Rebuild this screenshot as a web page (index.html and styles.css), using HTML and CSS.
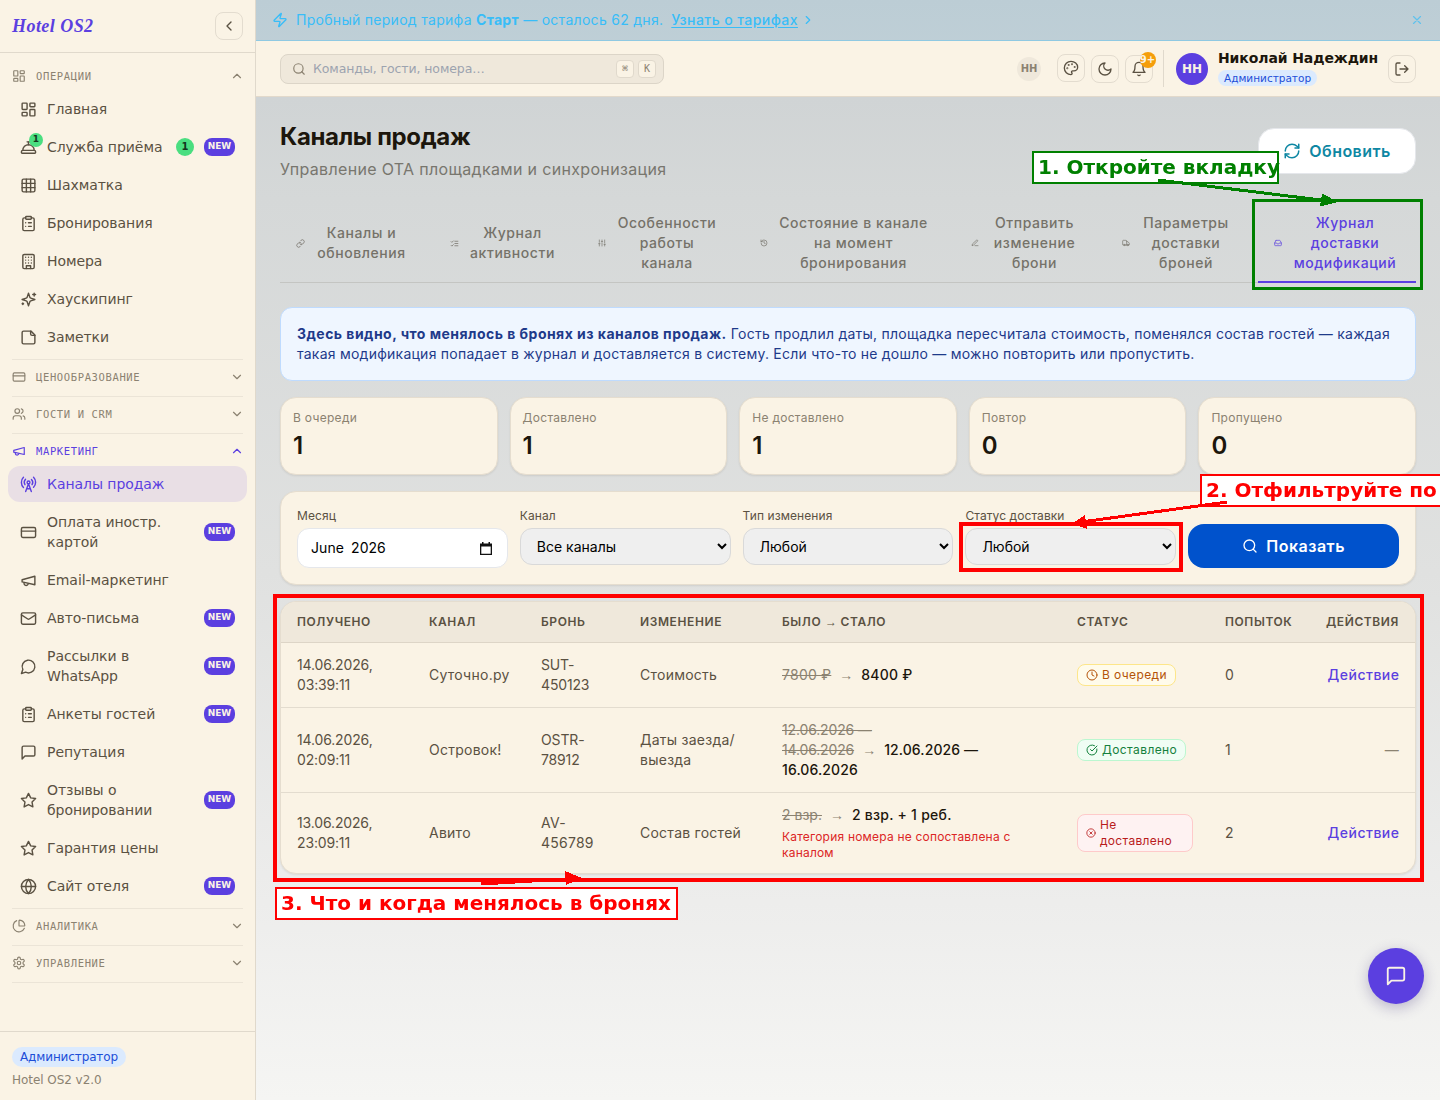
FILE: index.html
```html
<!DOCTYPE html>
<html lang="ru">
<head>
    <meta charset="UTF-8">
    <meta name="viewport" content="width=device-width, initial-scale=1.0">
    <title>Каналы продаж — Hotel OS2</title>
    <link rel="stylesheet" href="styles.css">
</head>
<body>
    <!-- Icon sprite -->
    <svg class="sprite" xmlns="http://www.w3.org/2000/svg">
        <symbol id="i-dashboard" viewBox="0 0 24 24"><rect width="7" height="9" x="3" y="3" rx="1"/><rect width="7" height="5" x="14" y="3" rx="1"/><rect width="7" height="9" x="14" y="12" rx="1"/><rect width="7" height="5" x="3" y="16" rx="1"/></symbol>
        <symbol id="i-bell-desk" viewBox="0 0 24 24"><path d="M3 20a1 1 0 0 1-1-1v-1a2 2 0 0 1 2-2h16a2 2 0 0 1 2 2v1a1 1 0 0 1-1 1Z"/><path d="M20 16a8 8 0 1 0-16 0"/><path d="M12 4v4"/><path d="M10 4h4"/></symbol>
        <symbol id="i-grid" viewBox="0 0 24 24"><rect width="18" height="18" x="3" y="3" rx="2"/><path d="M3 9h18M3 15h18M9 3v18M15 3v18"/></symbol>
        <symbol id="i-clipboard" viewBox="0 0 24 24"><rect width="8" height="4" x="8" y="2" rx="1"/><path d="M16 4h2a2 2 0 0 1 2 2v14a2 2 0 0 1-2 2H6a2 2 0 0 1-2-2V6a2 2 0 0 1 2-2h2"/><path d="M12 11h4M12 16h4M8 11h.01M8 16h.01"/></symbol>
        <symbol id="i-hotel" viewBox="0 0 24 24"><rect width="16" height="20" x="4" y="2" rx="2"/><path d="M9 22v-4h6v4M8 6h.01M16 6h.01M12 6h.01M12 10h.01M12 14h.01M16 10h.01M16 14h.01M8 10h.01M8 14h.01"/></symbol>
        <symbol id="i-sparkles" viewBox="0 0 24 24"><path d="m12 3-1.9 5.8a2 2 0 0 1-1.3 1.3L3 12l5.8 1.9a2 2 0 0 1 1.3 1.3L12 21l1.9-5.8a2 2 0 0 1 1.3-1.3L21 12l-5.8-1.9a2 2 0 0 1-1.3-1.3Z"/><path d="M20 3v4M22 5h-4M4 17v2M5 18H3"/></symbol>
        <symbol id="i-note" viewBox="0 0 24 24"><path d="M15.5 3H5a2 2 0 0 0-2 2v14a2 2 0 0 0 2 2h14a2 2 0 0 0 2-2V8.500Z"/><path d="M15 3v4a2 2 0 0 0 2 2h4"/></symbol>
        <symbol id="i-card" viewBox="0 0 24 24"><rect width="20" height="14" x="2" y="5" rx="2"/><path d="M2 10h20"/></symbol>
        <symbol id="i-users" viewBox="0 0 24 24"><path d="M16 21v-2a4 4 0 0 0-4-4H6a4 4 0 0 0-4 4v2"/><circle cx="9" cy="7" r="4"/><path d="M22 21v-2a4 4 0 0 0-3-3.870M16 3.130a4 4 0 0 1 0 7.750"/></symbol>
        <symbol id="i-megaphone" viewBox="0 0 24 24"><path d="m3 11 18-5v12L3 14v-3z"/><path d="M11.600 16.800a3 3 0 1 1-5.800-1.600"/></symbol>
        <symbol id="i-tower" viewBox="0 0 24 24"><path d="M4.900 16.100C1 12.200 1 5.800 4.900 1.900M7.800 4.700a6.140 6.140 0 0 0-.8 7.500"/><circle cx="12" cy="9" r="2"/><path d="M16.200 4.800c2 2 2.260 5.110.8 7.470M19.100 1.900a9.960 9.960 0 0 1 0 14.100M9.500 18h5M8 22l4-11 4 11"/></symbol>
        <symbol id="i-mail" viewBox="0 0 24 24"><rect width="20" height="16" x="2" y="4" rx="2"/><path d="m22 7-8.970 5.700a1.940 1.940 0 0 1-2.060 0L2 7"/></symbol>
        <symbol id="i-chat-round" viewBox="0 0 24 24"><path d="M7.900 20A9 9 0 1 0 4 16.100L2 22Z"/></symbol>
        <symbol id="i-chat" viewBox="0 0 24 24"><path d="M21 15a2 2 0 0 1-2 2H7l-4 4V5a2 2 0 0 1 2-2h14a2 2 0 0 1 2 2z"/></symbol>
        <symbol id="i-star" viewBox="0 0 24 24"><path d="m12 2 3.090 6.260L22 9.270l-5 4.870 1.180 6.880L12 17.770l-6.180 3.250L7 14.140 2 9.270l6.910-1.010z"/></symbol>
        <symbol id="i-globe" viewBox="0 0 24 24"><circle cx="12" cy="12" r="10"/><path d="M12 2a14.500 14.500 0 0 0 0 20 14.500 14.500 0 0 0 0-20M2 12h20"/></symbol>
        <symbol id="i-pie" viewBox="0 0 24 24"><path d="M21 12c.552 0 1.005-.449.950-.998a10 10 0 0 0-8.953-8.951c-.550-.055-.998.398-.998.950v8a1 1 0 0 0 1 1z"/><path d="M21.210 15.890A10 10 0 1 1 8 2.830"/></symbol>
        <symbol id="i-gear" viewBox="0 0 24 24"><path d="M12.220 2h-.440a2 2 0 0 0-2 2v.180a2 2 0 0 1-1 1.730l-.430.250a2 2 0 0 1-2 0l-.150-.080a2 2 0 0 0-2.730.730l-.220.380a2 2 0 0 0 .730 2.730l.150.100a2 2 0 0 1 1 1.720v.510a2 2 0 0 1-1 1.740l-.150.090a2 2 0 0 0-.730 2.730l.220.380a2 2 0 0 0 2.730.730l.150-.080a2 2 0 0 1 2 0l.430.250a2 2 0 0 1 1 1.730V20a2 2 0 0 0 2 2h.440a2 2 0 0 0 2-2v-.180a2 2 0 0 1 1-1.730l.430-.250a2 2 0 0 1 2 0l.150.080a2 2 0 0 0 2.730-.730l.220-.390a2 2 0 0 0-.730-2.730l-.150-.080a2 2 0 0 1-1-1.740v-.500a2 2 0 0 1 1-1.740l.150-.090a2 2 0 0 0 .730-2.730l-.220-.380a2 2 0 0 0-2.730-.730l-.150.080a2 2 0 0 1-2 0l-.430-.250a2 2 0 0 1-1-1.730V4a2 2 0 0 0-2-2z"/><circle cx="12" cy="12" r="3"/></symbol>
        <symbol id="i-up" viewBox="0 0 24 24"><path d="m18 15-6-6-6 6"/></symbol>
        <symbol id="i-down" viewBox="0 0 24 24"><path d="m6 9 6 6 6-6"/></symbol>
        <symbol id="i-left" viewBox="0 0 24 24"><path d="m15 18-6-6 6-6"/></symbol>
        <symbol id="i-right" viewBox="0 0 24 24"><path d="m9 18 6-6-6-6"/></symbol>
        <symbol id="i-zap" viewBox="0 0 24 24"><path d="M4 14a1 1 0 0 1-.780-1.630l9.900-10.200a.5.5 0 0 1 .860.460l-1.920 6.020A1 1 0 0 0 13 10h7a1 1 0 0 1 .780 1.630l-9.900 10.200a.5.5 0 0 1-.860-.460l1.920-6.020A1 1 0 0 0 11 14z"/></symbol>
        <symbol id="i-x" viewBox="0 0 24 24"><path d="M18 6 6 18M6 6l12 12"/></symbol>
        <symbol id="i-search" viewBox="0 0 24 24"><circle cx="11" cy="11" r="8"/><path d="m21 21-4.300-4.300"/></symbol>
        <symbol id="i-palette" viewBox="0 0 24 24"><circle cx="13.500" cy="6.500" r=".5"/><circle cx="17.500" cy="10.500" r=".5"/><circle cx="8.500" cy="7.500" r=".5"/><circle cx="6.500" cy="12.500" r=".5"/><path d="M12 2C6.500 2 2 6.500 2 12s4.500 10 10 10c.926 0 1.648-.746 1.648-1.688 0-.437-.180-.835-.437-1.125-.290-.289-.438-.652-.438-1.125a1.640 1.640 0 0 1 1.668-1.668h1.996c3.051 0 5.555-2.503 5.555-5.554C21.965 6.012 17.461 2 12 2z"/></symbol>
        <symbol id="i-moon" viewBox="0 0 24 24"><path d="M12 3a6 6 0 0 0 9 9 9 9 0 1 1-9-9Z"/></symbol>
        <symbol id="i-bell" viewBox="0 0 24 24"><path d="M6 8a6 6 0 0 1 12 0c0 7 3 9 3 9H3s3-2 3-9M10.300 21a1.940 1.940 0 0 0 3.400 0"/></symbol>
        <symbol id="i-logout" viewBox="0 0 24 24"><path d="M9 21H5a2 2 0 0 1-2-2V5a2 2 0 0 1 2-2h4M16 17l5-5-5-5M21 12H9"/></symbol>
        <symbol id="i-refresh" viewBox="0 0 24 24"><path d="M3 12a9 9 0 0 1 9-9 9.750 9.750 0 0 1 6.740 2.740L21 8"/><path d="M21 3v5h-5M21 12a9 9 0 0 1-9 9 9.750 9.750 0 0 1-6.740-2.740L3 16"/><path d="M8 16H3v5"/></symbol>
        <symbol id="i-link" viewBox="0 0 24 24"><path d="M10 13a5 5 0 0 0 7.540.540l3-3a5 5 0 0 0-7.070-7.070l-1.720 1.710"/><path d="M14 11a5 5 0 0 0-7.540-.540l-3 3a5 5 0 0 0 7.070 7.070l1.710-1.710"/></symbol>
        <symbol id="i-checks" viewBox="0 0 24 24"><path d="m3 17 2 2 4-4M3 7l2 2 4-4M13 6h8M13 12h8M13 18h8"/></symbol>
        <symbol id="i-sliders" viewBox="0 0 24 24"><path d="M4 21v-7M4 10V3M12 21v-9M12 8V3M20 21v-5M20 12V3M2 14h4M10 8h4M18 16h4"/></symbol>
        <symbol id="i-history" viewBox="0 0 24 24"><path d="M3 12a9 9 0 1 0 9-9 9.750 9.750 0 0 0-6.740 2.740L3 8"/><path d="M3 3v5h5M12 7v5l4 2"/></symbol>
        <symbol id="i-pen" viewBox="0 0 24 24"><path d="M12 20h9M16.500 3.500a2.120 2.120 0 0 1 3 3L7 19l-4 1 1-4Z"/></symbol>
        <symbol id="i-truck" viewBox="0 0 24 24"><path d="M14 18V6a2 2 0 0 0-2-2H4a2 2 0 0 0-2 2v11a1 1 0 0 0 1 1h2M15 18H9M19 18h2a1 1 0 0 0 1-1v-3.650a1 1 0 0 0-.220-.620l-3.480-4.350A1 1 0 0 0 17.520 8H14"/><circle cx="17" cy="18" r="2"/><circle cx="7" cy="18" r="2"/></symbol>
        <symbol id="i-inbox" viewBox="0 0 24 24"><path d="M22 12h-6l-2 3h-4l-2-3H2"/><path d="M5.450 5.110 2 12v6a2 2 0 0 0 2 2h16a2 2 0 0 0 2-2v-6l-3.450-6.890A2 2 0 0 0 16.760 4H7.240a2 2 0 0 0-1.790 1.110z"/></symbol>
        <symbol id="i-clock" viewBox="0 0 24 24"><circle cx="12" cy="12" r="10"/><path d="M12 6v6l4 2"/></symbol>
        <symbol id="i-check" viewBox="0 0 24 24"><path d="M21.801 10A10 10 0 1 1 17 3.335"/><path d="m9 11 3 3L22 4"/></symbol>
        <symbol id="i-fail" viewBox="0 0 24 24"><circle cx="12" cy="12" r="10"/><path d="m15 9-6 6M9 9l6 6"/></symbol>
    </svg>

    <div class="app">
        <aside class="sidebar">
            <div class="sidebar-head">
                <span class="brand">Hotel OS2</span>
                <button class="icon-btn"><svg class="icon"><use href="#i-left"/></svg></button>
            </div>
            <nav class="nav">
                <section class="group">
                    <div class="group-head"><svg class="icon"><use href="#i-dashboard"/></svg><span>Операции</span><svg class="icon chev"><use href="#i-up"/></svg></div>
                    <ul>
                        <li><svg class="icon"><use href="#i-dashboard"/></svg><span class="label">Главная</span></li>
                        <li><span class="icon-wrap"><svg class="icon"><use href="#i-bell-desk"/></svg><span class="dot">1</span></span><span class="label">Служба приёма</span><span class="count">1</span><span class="new">NEW</span></li>
                        <li><svg class="icon"><use href="#i-grid"/></svg><span class="label">Шахматка</span></li>
                        <li><svg class="icon"><use href="#i-clipboard"/></svg><span class="label">Бронирования</span></li>
                        <li><svg class="icon"><use href="#i-hotel"/></svg><span class="label">Номера</span></li>
                        <li><svg class="icon"><use href="#i-sparkles"/></svg><span class="label">Хаускипинг</span></li>
                        <li><svg class="icon"><use href="#i-note"/></svg><span class="label">Заметки</span></li>
                    </ul>
                </section>
                <section class="group">
                    <div class="group-head"><svg class="icon"><use href="#i-card"/></svg><span>Ценообразование</span><svg class="icon chev"><use href="#i-down"/></svg></div>
                </section>
                <section class="group">
                    <div class="group-head"><svg class="icon"><use href="#i-users"/></svg><span>Гости и CRM</span><svg class="icon chev"><use href="#i-down"/></svg></div>
                </section>
                <section class="group">
                    <div class="group-head current"><svg class="icon"><use href="#i-megaphone"/></svg><span>Маркетинг</span><svg class="icon chev"><use href="#i-up"/></svg></div>
                    <ul>
                        <li class="active"><svg class="icon"><use href="#i-tower"/></svg><span class="label">Каналы продаж</span></li>
                        <li><svg class="icon"><use href="#i-card"/></svg><span class="label">Оплата иностр. картой</span><span class="new">NEW</span></li>
                        <li><svg class="icon"><use href="#i-megaphone"/></svg><span class="label">Email-маркетинг</span></li>
                        <li><svg class="icon"><use href="#i-mail"/></svg><span class="label">Авто-письма</span><span class="new">NEW</span></li>
                        <li><svg class="icon"><use href="#i-chat-round"/></svg><span class="label">Рассылки в WhatsApp</span><span class="new">NEW</span></li>
                        <li><svg class="icon"><use href="#i-clipboard"/></svg><span class="label">Анкеты гостей</span><span class="new">NEW</span></li>
                        <li><svg class="icon"><use href="#i-chat"/></svg><span class="label">Репутация</span></li>
                        <li><svg class="icon"><use href="#i-star"/></svg><span class="label">Отзывы о бронировании</span><span class="new">NEW</span></li>
                        <li><svg class="icon"><use href="#i-star"/></svg><span class="label">Гарантия цены</span></li>
                        <li><svg class="icon"><use href="#i-globe"/></svg><span class="label">Сайт отеля</span><span class="new">NEW</span></li>
                    </ul>
                </section>
                <section class="group">
                    <div class="group-head"><svg class="icon"><use href="#i-pie"/></svg><span>Аналитика</span><svg class="icon chev"><use href="#i-down"/></svg></div>
                </section>
                <section class="group">
                    <div class="group-head"><svg class="icon"><use href="#i-gear"/></svg><span>Управление</span><svg class="icon chev"><use href="#i-down"/></svg></div>
                </section>
            </nav>
            <div class="sidebar-foot">
                <span class="role">Администратор</span>
                <div class="version">Hotel OS2 v2.0</div>
            </div>
        </aside>

        <div class="page">
            <div class="trial">
                <svg class="icon"><use href="#i-zap"/></svg>
                <span class="trial-text">Пробный период тарифа <b>Старт</b> — осталось 62 дня.</span>
                <a href="#">Узнать о тарифах</a>
                <svg class="icon arrow"><use href="#i-right"/></svg>
                <svg class="icon close"><use href="#i-x"/></svg>
            </div>

            <header class="topbar">
                <div class="search">
                    <svg class="icon"><use href="#i-search"/></svg>
                    <span class="placeholder">Команды, гости, номера…</span>
                    <kbd>⌘</kbd><kbd>K</kbd>
                </div>
                <div class="tools">
                    <span class="avatar-sm">НН</span>
                    <button class="icon-btn raised"><svg class="icon"><use href="#i-palette"/></svg></button>
                    <button class="icon-btn"><svg class="icon"><use href="#i-moon"/></svg></button>
                    <button class="icon-btn"><svg class="icon"><use href="#i-bell"/></svg><span class="notif">9+</span></button>
                </div>
                <div class="user">
                    <span class="avatar">НН</span>
                    <div class="user-info">
                        <span class="user-name">Николай Надеждин</span>
                        <span class="role small">Администратор</span>
                    </div>
                    <button class="icon-btn"><svg class="icon"><use href="#i-logout"/></svg></button>
                </div>
            </header>

            <main class="content">
                <div class="title-row">
                    <div>
                        <h1>Каналы продаж</h1>
                        <p class="subtitle">Управление OTA площадками и синхронизация</p>
                    </div>
                    <button class="btn-refresh"><svg class="icon"><use href="#i-refresh"/></svg>Обновить</button>
                </div>

                <div class="tabs">
                    <div class="tab"><svg class="icon wide"><use href="#i-link"/></svg><span>Каналы и<br>обновления</span></div>
                    <div class="tab"><svg class="icon wide"><use href="#i-checks"/></svg><span>Журнал<br>активности</span></div>
                    <div class="tab"><svg class="icon"><use href="#i-sliders"/></svg><span>Особенности<br>работы<br>канала</span></div>
                    <div class="tab"><svg class="icon"><use href="#i-history"/></svg><span>Состояние в канале<br>на момент<br>бронирования</span></div>
                    <div class="tab"><svg class="icon"><use href="#i-pen"/></svg><span>Отправить<br>изменение<br>брони</span></div>
                    <div class="tab"><svg class="icon"><use href="#i-truck"/></svg><span>Параметры<br>доставки<br>броней</span></div>
                    <div class="tab selected"><svg class="icon"><use href="#i-inbox"/></svg><span>Журнал<br>доставки<br>модификаций</span></div>
                </div>

                <div class="info"><b>Здесь видно, что менялось в бронях из каналов продаж.</b> Гость продлил даты, площадка пересчитала стоимость, поменялся состав гостей — каждая такая модификация попадает в журнал и доставляется в систему. Если что-то не дошло — можно повторить или пропустить.</div>

                <div class="stats">
                    <div class="card stat"><div class="stat-label">В очереди</div><div class="stat-value">1</div></div>
                    <div class="card stat"><div class="stat-label">Доставлено</div><div class="stat-value">1</div></div>
                    <div class="card stat"><div class="stat-label">Не доставлено</div><div class="stat-value">1</div></div>
                    <div class="card stat"><div class="stat-label">Повтор</div><div class="stat-value">0</div></div>
                    <div class="card stat"><div class="stat-label">Пропущено</div><div class="stat-value">0</div></div>
                </div>

                <form class="card filters">
                    <div>
                        <span class="field-label">Месяц</span>
                        <div class="month">
                            <span class="month-name">June</span><span>2026</span>
                            <svg class="month-icon" viewBox="0 0 12 13"><path d="M2 0h1.500v1.500h5V0H10v1.500h2V13H0V1.500h2zM1.300 4.500v7.200h9.400V4.500z" fill-rule="evenodd"/></svg>
                        </div>
                    </div>
                    <label><span class="field-label">Канал</span><select><option>Все каналы</option></select></label>
                    <label><span class="field-label">Тип изменения</span><select><option>Любой</option></select></label>
                    <label><span class="field-label">Статус доставки</span><select><option>Любой</option></select></label>
                    <button type="button" class="btn-show"><svg class="icon"><use href="#i-search"/></svg>Показать</button>
                </form>

                <div class="card table-card">
                    <table>
                        <colgroup>
                            <col class="c-date"><col class="c-channel"><col class="c-booking"><col class="c-change"><col class="c-diff"><col class="c-status"><col class="c-tries"><col class="c-actions">
                        </colgroup>
                        <thead>
                            <tr><th>Получено</th><th>Канал</th><th>Бронь</th><th>Изменение</th><th>Было <i class="arr">→</i> стало</th><th>Статус</th><th>Попыток</th><th class="right">Действия</th></tr>
                        </thead>
                        <tbody>
                            <tr>
                                <td class="date">14.06.2026, 03:39:11</td>
                                <td>Суточно.ру</td>
                                <td class="num">SUT-<br>450123</td>
                                <td>Стоимость</td>
                                <td><s>7800 ₽</s><i class="to">→</i><span class="after">8400 ₽</span></td>
                                <td><span class="badge wait"><svg class="icon"><use href="#i-clock"/></svg>В очереди</span></td>
                                <td>0</td>
                                <td class="right"><a href="#">Действие</a></td>
                            </tr>
                            <tr>
                                <td class="date">14.06.2026, 02:09:11</td>
                                <td>Островок!</td>
                                <td class="num">OSTR-<br>78912</td>
                                <td>Даты заезда/<br>выезда</td>
                                <td class="num"><s>12.06.2026 —<br>14.06.2026</s><i class="to">→</i><span class="after">12.06.2026 —<br>16.06.2026</span></td>
                                <td><span class="badge ok"><svg class="icon"><use href="#i-check"/></svg>Доставлено</span></td>
                                <td>1</td>
                                <td class="right muted">—</td>
                            </tr>
                            <tr>
                                <td class="date">13.06.2026, 23:09:11</td>
                                <td>Авито</td>
                                <td>AV-<br>456789</td>
                                <td>Состав гостей</td>
                                <td class="guests"><s>2 взр.</s><i class="to">→</i><span class="after">2 взр. + 1 реб.</span><div class="error">Категория номера не сопоставлена с каналом</div></td>
                                <td><span class="badge fail"><svg class="icon"><use href="#i-fail"/></svg>Не доставлено</span></td>
                                <td>2</td>
                                <td class="right"><a href="#">Действие</a></td>
                            </tr>
                        </tbody>
                    </table>
                </div>
            </main>
        </div>
    </div>

    <button class="chat-fab"><svg class="icon"><use href="#i-chat"/></svg></button>

    <!-- Step-by-step hints drawn over the page -->
    <svg class="hints" width="1440" height="1100" viewBox="0 0 1440 1100" shape-rendering="crispEdges">
        <g class="hint green">
            <rect class="frame thin" x="1253.5" y="200.5" width="168" height="88"/>
            <rect class="box" x="1033" y="152" width="245" height="31"/>
            <text x="1038" y="174">1. Откройте вкладку</text>
            <path class="line" d="M1158 180 L1325 200.500"/>
            <path class="head" d="M1338 202 L1320 206.500 L1322 193.500 Z"/>
        </g>
        <g class="hint red">
            <rect class="frame" x="961" y="524" width="220" height="46"/>
            <rect class="box" x="1201" y="475" width="300" height="31"/>
            <text x="1206" y="497">2. Отфильтруйте по</text>
            <path class="line" d="M1227 502 L1085 521.500"/>
            <path class="head" d="M1072 523.500 L1085 515 L1087 529 Z"/>
        </g>
        <g class="hint red">
            <rect class="frame" x="275" y="596" width="1147" height="284"/>
            <rect class="box" x="276" y="888" width="401" height="31"/>
            <text x="281" y="910">3. Что и когда менялось в бронях</text>
            <path class="line" d="M481 884 L567 879"/>
            <path class="head" d="M582 878 L565 871 L566 885 Z"/>
        </g>
    </svg>
</body>
</html>
```

FILE: styles.css
```css
* {
    box-sizing: border-box;
}
body {
    margin: 0;
    font-family: "DejaVu Sans", sans-serif;
    font-size: 14px;
    line-height: 20px;
    color: #5a5142;
    background: linear-gradient(180deg, #cbd0d2 0%, #d5d8d8 18%, #e0e1e0 52%, #ededec 82%, #f5f5f3 100%);
    height: 1100px;
    overflow: hidden;
}
button {
    font-family: inherit;
    cursor: pointer;
}
.sprite {
    display: none;
}
.icon {
    width: 16px;
    height: 16px;
    flex-shrink: 0;
    fill: none;
    stroke: currentColor;
    stroke-width: 2;
    stroke-linecap: round;
    stroke-linejoin: round;
}
.app {
    display: flex;
    height: 1100px;
}

/* Sidebar */
.sidebar {
    width: 256px;
    flex-shrink: 0;
    display: flex;
    flex-direction: column;
    background: #faf3e5;
    border-right: 1px solid #e0d9cc;
}
.sidebar-head {
    height: 53px;
    padding: 0 12px;
    display: flex;
    align-items: center;
    justify-content: space-between;
    border-bottom: 1px solid #e0d9cc;
}
.brand {
    font-family: "Liberation Serif", serif;
    font-weight: bold;
    font-style: italic;
    font-size: 18px;
    letter-spacing: 0.45px;
    color: #5b3fe0;
}
.icon-btn {
    position: relative;
    width: 28px;
    height: 28px;
    padding: 0;
    display: flex;
    align-items: center;
    justify-content: center;
    flex-shrink: 0;
    background: transparent;
    border: 1px solid #e3dccf;
    border-radius: 8px;
    color: #5a5142;
}
.nav {
    flex: 1;
    padding: 6px 8px 0;
}
.group {
    position: relative;
    padding-bottom: 5px;
}
.group::after {
    content: "";
    display: block;
    height: 1px;
    margin: 4px 4px -5px;
    background: #ebe4d7;
}
.group-head {
    height: 32px;
    padding: 9px 4px 7px;
    display: flex;
    align-items: center;
    gap: 10px;
    font-family: "DejaVu Sans Mono", monospace;
    font-size: 10.5px;
    letter-spacing: 0.63px;
    text-transform: uppercase;
    color: #8b8271;
}
.group-head .icon {
    width: 14px;
    height: 14px;
}
.group-head .chev {
    margin-left: auto;
    margin-right: -1px;
}
.group-head.current {
    color: #5b3fe0;
}
.nav ul {
    list-style: none;
    margin: 0;
    padding: 0;
    display: flex;
    flex-direction: column;
    gap: 2px;
}
.nav li {
    padding: 8px 12px;
    display: flex;
    align-items: center;
    gap: 10px;
    border-radius: 12px;
}
.nav li .icon {
    width: 17px;
    height: 17px;
}
.nav li.active {
    background: #e9dfe5;
    color: #5b3fe0;
}
.label {
    flex: 1;
    min-width: 0;
    letter-spacing: -0.06px;
}
.icon-wrap {
    position: relative;
    display: flex;
}
.dot {
    position: absolute;
    top: -6px;
    left: 9px;
    width: 14px;
    height: 14px;
    border-radius: 50%;
    background: #4ade80;
    color: #14361f;
    font-size: 9px;
    font-weight: bold;
    line-height: 12px;
    text-align: center;
}
.count {
    width: 18px;
    height: 18px;
    border-radius: 50%;
    background: #4ade80;
    color: #14361f;
    font-size: 10px;
    font-weight: bold;
    line-height: 18px;
    text-align: center;
}
.new {
    width: 31px;
    height: 18px;
    border-radius: 8px;
    background: #5b3fe0;
    color: #faf3e5;
    font-size: 9px;
    font-weight: bold;
    line-height: 16px;
    text-align: center;
}
.sidebar-foot {
    height: 69px;
    padding: 15px 12px 0;
    border-top: 1px solid #e0d9cc;
}
.role {
    display: table;
    padding: 0 8px;
    border-radius: 10px;
    background: #dbeafe;
    color: #1d4ed8;
    font-size: 12px;
    letter-spacing: -0.12px;
}
.version {
    margin-top: 3px;
    font-size: 12px;
    letter-spacing: -0.05px;
    color: #8b8271;
}

/* Page */
.page {
    flex: 1;
    min-width: 0;
    font-family: Inter, sans-serif;
}
.trial {
    height: 41px;
    padding: 0 16px;
    display: flex;
    align-items: center;
    background: rgba(56, 189, 248, 0.1);
    border-bottom: 1px solid #8fc9e2;
    color: #38bdf8;
    letter-spacing: 0.29px;
}
.trial-text {
    margin: 0 8px;
}
.trial a {
    color: inherit;
    font-weight: 500;
    letter-spacing: 0.43px;
    text-underline-offset: 2px;
}
.trial .arrow {
    width: 14px;
    height: 14px;
    margin-left: 3px;
}
.trial .close {
    width: 14px;
    height: 14px;
    margin-left: auto;
    opacity: 0.7;
}
.topbar {
    height: 56px;
    padding: 0 24px;
    display: flex;
    align-items: center;
    background: #faf3e5;
    border-bottom: 1px solid #e2d9cb;
    font-family: "DejaVu Sans", sans-serif;
}
.search {
    width: 384px;
    height: 30px;
    padding: 0 7px 0 11px;
    display: flex;
    align-items: center;
    gap: 4px;
    background: #efe8db;
    border: 1px solid #dcd5c8;
    border-radius: 8px;
    color: #8b8271;
}
.search .icon {
    width: 14px;
    height: 14px;
}
.placeholder {
    flex: 1;
    margin-left: 3px;
    font-size: 12.5px;
    letter-spacing: -0.09px;
    color: #9ca3af;
}
kbd {
    width: 18px;
    height: 18px;
    border: 1px solid #e0d9cc;
    border-radius: 4px;
    background: #faf3e5;
    font-family: "DejaVu Sans Mono", monospace;
    font-size: 10px;
    line-height: 16px;
    text-align: center;
}
.tools {
    margin-left: auto;
    padding-right: 10px;
    display: flex;
    align-items: center;
    gap: 6px;
}
.avatar-sm {
    width: 24px;
    height: 24px;
    margin-right: 10px;
    border-radius: 50%;
    background: #efe8db;
    color: #8b8271;
    font-size: 10px;
    font-weight: bold;
    line-height: 23px;
    text-align: center;
}
.raised {
    margin-top: -2px;
}
.notif {
    position: absolute;
    top: -4px;
    right: -4px;
    width: 16px;
    height: 16px;
    border-radius: 50%;
    background: #f59e0b;
    color: #faf3e5;
    font-size: 10px;
    font-weight: bold;
    line-height: 15px;
    text-align: center;
    text-indent: -1px;
}
.user {
    height: 37px;
    padding-left: 12px;
    display: flex;
    align-items: center;
    gap: 10px;
    border-left: 1px solid #e0d9cc;
}
.user-info {
    width: 160px;
    padding-bottom: 4px;
}
.avatar {
    width: 32px;
    height: 32px;
    border-radius: 50%;
    background: #5b3fe0;
    color: #faf3e5;
    font-size: 12px;
    font-weight: bold;
    line-height: 32px;
    text-align: center;
}
.user-name {
    display: block;
    margin-bottom: 2px;
    font-weight: bold;
    letter-spacing: -0.1px;
    white-space: nowrap;
    color: #1c160c;
}
.role.small {
    padding: 0 6px;
    border-radius: 8px;
    font-size: 10.5px;
    letter-spacing: 0;
    line-height: 16px;
}

/* Content */
.content {
    padding: 24px;
}
.title-row {
    height: 60px;
    display: flex;
    justify-content: space-between;
    align-items: center;
}
h1 {
    margin: 0;
    font-size: 24px;
    line-height: 32px;
    font-weight: 700;
    letter-spacing: -0.35px;
    color: #1c160c;
}
.subtitle {
    margin: 4px 0 0;
    font-size: 16px;
    line-height: 24px;
    letter-spacing: 0.33px;
    color: #78766e;
}
.btn-refresh {
    width: 158px;
    height: 46px;
    display: flex;
    align-items: center;
    justify-content: center;
    gap: 8px;
    border: 1px solid #e5e7eb;
    border-radius: 16px;
    background: #fff;
    color: #0e87a3;
    font-size: 16px;
    font-weight: 600;
    letter-spacing: 0.45px;
}
.btn-refresh .icon {
    width: 18px;
    height: 18px;
}
.tabs {
    margin-top: 24px;
    display: grid;
    grid-template-columns: 146fr 140fr 154fr 203fr 143fr 144fr 158fr;
    gap: 8px;
    border-bottom: 1px solid #c4c5c2;
}
.tab {
    height: 78px;
    margin-bottom: -1px;
    padding: 0 16px;
    display: flex;
    align-items: center;
    gap: 8px;
    border-bottom: 2px solid transparent;
    font-weight: 500;
    letter-spacing: 0.55px;
    text-align: center;
    color: #757269;
}
.tab .icon {
    width: 8px;
    height: 8px;
}
.tab .icon.wide {
    width: 9px;
    height: 9px;
}
.tab span {
    flex: 1;
    min-width: 0;
    white-space: nowrap;
}
.tab.selected {
    color: #5b3fe0;
    border-bottom-color: #5b3fe0;
}
.info {
    margin-top: 24px;
    padding: 16px;
    border: 1px solid #bfdbfe;
    border-radius: 12px;
    background: #eff6ff;
    color: #1e3a8a;
    letter-spacing: 0.24px;
}
.info b {
    font-weight: 700;
    letter-spacing: 0.47px;
}
.card {
    margin-top: 16px;
    border: 1px solid #e5ddcf;
    border-radius: 16px;
    background: #faf3e5;
    box-shadow: 0 1px 2px rgba(60, 50, 30, 0.1);
}
.stats {
    margin-top: 16px;
    display: grid;
    grid-template-columns: repeat(5, 1fr);
    gap: 12px;
}
.stat {
    margin: 0;
    padding: 12px;
}
.stat-label {
    font-size: 12px;
    line-height: 16px;
    letter-spacing: 0.3px;
    color: #8b8271;
}
.stat-value {
    margin-top: 4px;
    font-size: 24px;
    line-height: 32px;
    font-weight: 600;
    color: #1c160c;
}
.filters {
    padding: 16px;
    display: grid;
    grid-template-columns: repeat(5, 1fr);
    gap: 12px;
}
.field-label {
    display: block;
    margin-bottom: 4px;
    font-size: 12px;
    line-height: 16px;
    letter-spacing: 0.08px;
}
.month,
.filters select {
    width: 100%;
    border: 1px solid #e5e7eb;
    border-radius: 12px;
    font-family: inherit;
    font-size: 14px;
    color: #000;
}
.month {
    height: 40px;
    padding: 0 15px 0 13px;
    display: flex;
    align-items: center;
    background: #fff;
}
.month-name {
    margin-right: 7px;
    letter-spacing: 0.1px;
}
.month-icon {
    width: 12px;
    height: 13px;
    margin-left: auto;
    fill: #111;
}
.filters select {
    display: block;
    height: 37px;
    padding: 0 12px;
    border-color: #d9d9d9;
    background: #efefef;
}
.btn-show {
    height: 44px;
    align-self: end;
    display: flex;
    align-items: center;
    justify-content: center;
    gap: 8px;
    border: none;
    border-radius: 16px;
    background: #0052cc;
    color: #fff;
    font-size: 16px;
    font-weight: 600;
    letter-spacing: 0.5px;
}
.table-card {
    overflow: hidden;
}
table {
    width: 100%;
    table-layout: fixed;
    border-collapse: separate;
    border-spacing: 0;
}
.c-date { width: 132px; }
.c-channel { width: 112px; }
.c-booking { width: 99px; }
.c-change { width: 142px; }
.c-diff { width: 295px; }
.c-status { width: 148px; }
.c-tries { width: 100px; }
.c-actions { width: 106px; }
th {
    padding: 12px 16px;
    font-size: 12px;
    line-height: 16px;
    font-weight: 600;
    letter-spacing: 0.6px;
    text-align: left;
    text-transform: uppercase;
    white-space: nowrap;
    background: #efe8db;
    border-bottom: 1px solid #ddd5c7;
}
td {
    padding: 12px 16px;
    letter-spacing: 0.25px;
    border-bottom: 1px solid #e3dccf;
}
td.date {
    letter-spacing: -0.15px;
}
td.num {
    letter-spacing: -0.15px;
}
td.num .after {
    letter-spacing: 0.1px;
}
td.guests {
    letter-spacing: 0;
}
td.guests .after {
    letter-spacing: 0.25px;
}
tr:last-child td {
    border-bottom: none;
}
th.right,
td.right {
    padding-left: 0;
    text-align: right;
}
td a {
    color: #5b3fe0;
    font-weight: 500;
    letter-spacing: 0.5px;
    margin-right: -0.5px;
    text-decoration: none;
}
s,
.muted,
.to {
    color: #8b8271;
}
.to,
.arr {
    font-family: "Liberation Sans", sans-serif;
    font-style: normal;
    font-weight: normal;
    letter-spacing: 0;
}
.to {
    margin: 0 8px;
    line-height: 1;
}
.after {
    font-weight: 500;
    color: #1c160c;
}
.error {
    margin-top: 4px;
    font-size: 12px;
    line-height: 16px;
    letter-spacing: 0.2px;
    color: #dc2626;
}
.badge {
    display: inline-flex;
    align-items: center;
    gap: 4px;
    padding: 2px 8px;
    border: 1px solid;
    border-radius: 8px;
    font-size: 12px;
    line-height: 16px;
    letter-spacing: 0.4px;
    vertical-align: middle;
}
.badge .icon {
    width: 12px;
    height: 12px;
}
.badge.wait {
    background: #fffbeb;
    border-color: #fde68a;
    color: #b45309;
}
.badge.ok {
    background: #f0fdf4;
    border-color: #bbf7d0;
    color: #15803d;
}
.badge.fail {
    background: #fef2f2;
    border-color: #fecaca;
    color: #b91c1c;
    letter-spacing: 0.3px;
}
.badge.fail .icon {
    width: 10px;
    height: 10px;
}

/* Floating chat button */
.chat-fab {
    position: fixed;
    right: 16px;
    bottom: 96px;
    width: 56px;
    height: 56px;
    padding: 0;
    display: flex;
    align-items: center;
    justify-content: center;
    border: none;
    border-radius: 50%;
    background: #5b3fe0;
    color: #faf3e5;
    box-shadow: 0 4px 14px rgba(60, 45, 120, 0.3);
}
.chat-fab .icon {
    width: 22px;
    height: 22px;
}

/* Hints */
.hints {
    position: absolute;
    top: 0;
    left: 0;
    pointer-events: none;
}
.hint.green {
    color: #008000;
}
.hint.red {
    color: #ff0000;
}
.hint .frame {
    fill: none;
    stroke: currentColor;
    stroke-width: 4;
}
.hint .frame.thin {
    stroke-width: 3;
}
.hint .box {
    fill: #fff;
    stroke: currentColor;
    stroke-width: 2;
}
.hint .line {
    stroke: currentColor;
    stroke-width: 3;
}
.hint .head {
    fill: currentColor;
}
.hint text {
    fill: currentColor;
    font-family: "DejaVu Sans", sans-serif;
    font-size: 20px;
    font-weight: bold;
}
```
